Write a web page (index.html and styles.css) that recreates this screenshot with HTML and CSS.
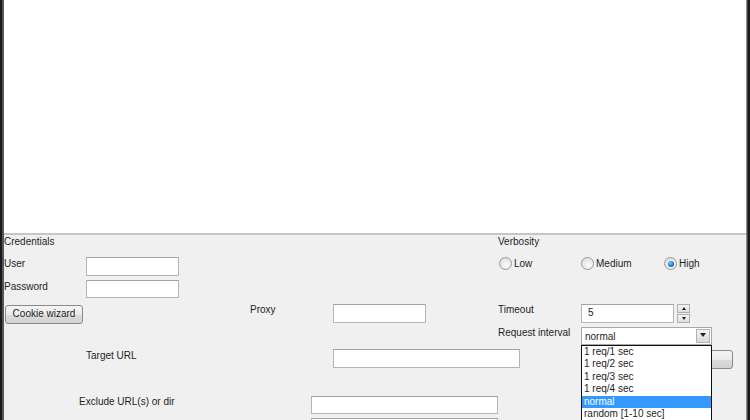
FILE: index.html
```html
<!DOCTYPE html>
<html>
<head>
<meta charset="utf-8">
<link rel="stylesheet" href="styles.css">
</head>
<body>
<div class="frame">
  <div class="output"></div>
  <div class="panel">
    <div class="lbl c-cred r1">Credentials</div>
    <div class="lbl c-verb r1">Verbosity</div>

    <div class="lbl c-cred r2 m1">User</div>
    <div class="field c-user r2 m1 w93"></div>
    <label class="radio-opt c-low r2"><span class="radio"></span>Low</label>
    <label class="radio-opt c-med r2"><span class="radio"></span>Medium</label>
    <label class="radio-opt c-high r2"><span class="radio checked"></span>High</label>

    <div class="lbl c-cred r3 m1">Password</div>
    <div class="field c-user r3 m1 w93 h18"></div>

    <div class="btn c-cookie r4">Cookie wizard</div>
    <div class="lbl c-proxy r4 m1">Proxy</div>
    <div class="field c-proxyin r4 m2 w93"></div>
    <div class="lbl c-verb r4 m1">Timeout</div>
    <div class="spin c-spin r4 m2">
      <div class="field w93">5</div>
      <div class="spin-btns">
        <div class="spin-btn"><span class="tri-up"></span></div>
        <div class="spin-btn"><span class="tri-down"></span></div>
      </div>
    </div>

    <div class="lbl c-verb r5">Request interval</div>
    <div class="combo c-spin r5 m1">
      <span>normal</span>
      <div class="combo-btn"><span class="tri-down big"></span></div>
      <ul class="popup">
        <li>1 req/1 sec</li>
        <li>1 req/2 sec</li>
        <li>1 req/3 sec</li>
        <li>1 req/4 sec</li>
        <li class="sel">normal</li>
        <li>random [1-10 sec]</li>
      </ul>
    </div>

    <div class="lbl c-target r6 m2">Target URL</div>
    <div class="field c-proxyin r6 m2 w187"></div>
    <div class="btn c-startbtn r6 m3"></div>

    <div class="lbl c-excl r7 m3">Exclude URL(s) or dir</div>
    <div class="field c-exclin r7 m4 w187 h18"></div>
    <div class="field c-exclin r8 m2 w187"></div>
  </div>
</div>
</body>
</html>
```
FILE: styles.css
```css
html, body {
  margin: 0;
  padding: 0;
  width: 750px;
  height: 420px;
  overflow: hidden;
  background: #1a1a1a;
}
.frame {
  width: 742px;
  height: 420px;
  margin-left: 4px;
  display: flex;
  flex-direction: column;
  font-family: "Liberation Sans", Arial, sans-serif;
  font-size: 10px;
  color: #1e1e1e;
  box-shadow: -2px 0 0 #555, 1px 0 0 #8a8a8a, 2px 0 0 #444;
}
.output {
  height: 233px;
  background: #ffffff;
  border-bottom: 2px solid #c6c6c6;
  flex: none;
}
.panel {
  flex: 1;
  background: #f0f0f0;
  display: grid;
  grid-template-columns: 75px 7px 164px 61px 22px 165px 83px 83px 1fr;
  grid-template-rows: 21px 23px 23px 24px 21px 45px 24px 1fr;
  align-items: start;
}
.lbl { line-height: 13px; white-space: nowrap; }
.r1 { grid-row: 1; }
.r2 { grid-row: 2; }
.r3 { grid-row: 3; }
.r4 { grid-row: 4; }
.r5 { grid-row: 5; }
.r6 { grid-row: 6; }
.r7 { grid-row: 7; }
.r8 { grid-row: 8; }
.m1 { margin-top: 1px; }
.m2 { margin-top: 2px; }
.m3 { margin-top: 3px; }
.m4 { margin-top: 4px; }

.c-cred { grid-column: 1 / 3; }
.c-excl { grid-column: 2 / 5; }
.c-target { grid-column: 3 / 4; }
.c-user { grid-column: 3 / 4; }
.c-proxy { grid-column: 4 / 5; }
.c-exclin { grid-column: 5 / 7; }
.c-proxyin { grid-column: 6 / 8; }
.c-verb { grid-column: 7 / 8; }
.c-low { grid-column: 7 / 8; margin-left: 1px; }
.c-med { grid-column: 8 / 9; }
.c-high { grid-column: 9 / 10; }
.c-spin { grid-column: 8 / 10; }
.c-cookie { grid-column: 1 / 3; margin-left: 1px; margin-top: 3px; }
.c-startbtn { grid-column: 8 / 10; margin-left: 20px; }

.field {
  box-sizing: border-box;
  height: 19px;
  background: #fff;
  border: 1px solid #b5b5b5;
  border-top-color: #a3a3a3;
  line-height: 16px;
  padding-left: 6px;
  font-size: 10px;
}
.w93 { width: 93px; }
.w187 { width: 187px; }
.h18 { height: 18px; }

.btn {
  box-sizing: border-box;
  width: 78px;
  height: 19px;
  border: 1px solid #8a8a8a;
  border-radius: 3px;
  background: linear-gradient(#f4f4f4 0%, #ebebeb 50%, #dcdcdc 51%, #d2d2d2 100%);
  text-align: center;
  line-height: 16px;
  color: #1e1e1e;
}
.btn.c-startbtn { width: 132px; }

.radio-opt {
  display: flex;
  align-items: center;
  gap: 2px;
  line-height: 13px;
  margin-top: 1px;
}
.radio {
  box-sizing: border-box;
  width: 13px;
  height: 13px;
  border-radius: 50%;
  border: 1px solid #9a9a9a;
  background: radial-gradient(circle at 60% 65%, #fbfbfb 0%, #e6e6e6 60%, #cfcfcf 100%);
  position: relative;
}
.radio.checked::after {
  content: "";
  position: absolute;
  left: 2.5px;
  top: 2.5px;
  width: 6px;
  height: 6px;
  border-radius: 50%;
  background: radial-gradient(circle at 40% 35%, #7fd0ff 0%, #1b78c8 55%, #0c3f7a 100%);
}

.spin { display: flex; gap: 3px; align-items: flex-start; }
.spin-btns { display: flex; flex-direction: column; gap: 1px; }
.spin-btn {
  box-sizing: border-box;
  width: 13px;
  height: 9px;
  border: 1px solid #b0b0b0;
  background: linear-gradient(#f6f6f6, #dedede);
  display: flex;
  align-items: center;
  justify-content: center;
}
.tri-up {
  width: 0; height: 0;
  border-left: 2.5px solid transparent;
  border-right: 2.5px solid transparent;
  border-bottom: 3px solid #222;
}
.tri-down {
  width: 0; height: 0;
  border-left: 2.5px solid transparent;
  border-right: 2.5px solid transparent;
  border-top: 3px solid #222;
}
.tri-down.big {
  border-left-width: 3.5px;
  border-right-width: 3.5px;
  border-top-width: 4px;
}

.combo {
  box-sizing: border-box;
  width: 131px;
  height: 18px;
  background: #fff;
  border: 1px solid #a8a8a8;
  position: relative;
  display: flex;
  align-items: center;
  justify-content: space-between;
  padding-left: 3px;
}
.combo span { line-height: 14px; padding-top: 2px; }
.combo-btn {
  box-sizing: border-box;
  width: 14px;
  height: 14px;
  margin-right: 1px;
  border: 1px solid #b3b3b3;
  background: linear-gradient(#f5f5f5, #d9d9d9);
  display: flex;
  align-items: center;
  justify-content: center;
}
.popup {
  position: absolute;
  left: -1px;
  top: 17px;
  width: 131px;
  box-sizing: border-box;
  margin: 0;
  padding: 0;
  list-style: none;
  background: #fff;
  border: 1px solid #111;
  z-index: 5;
}
.popup li {
  height: 12.4px;
  line-height: 12.4px;
  padding-left: 2px;
  white-space: nowrap;
  color: #1e1e1e;
}
.popup li.sel {
  background: #3399ff;
  color: #fff;
}
```
